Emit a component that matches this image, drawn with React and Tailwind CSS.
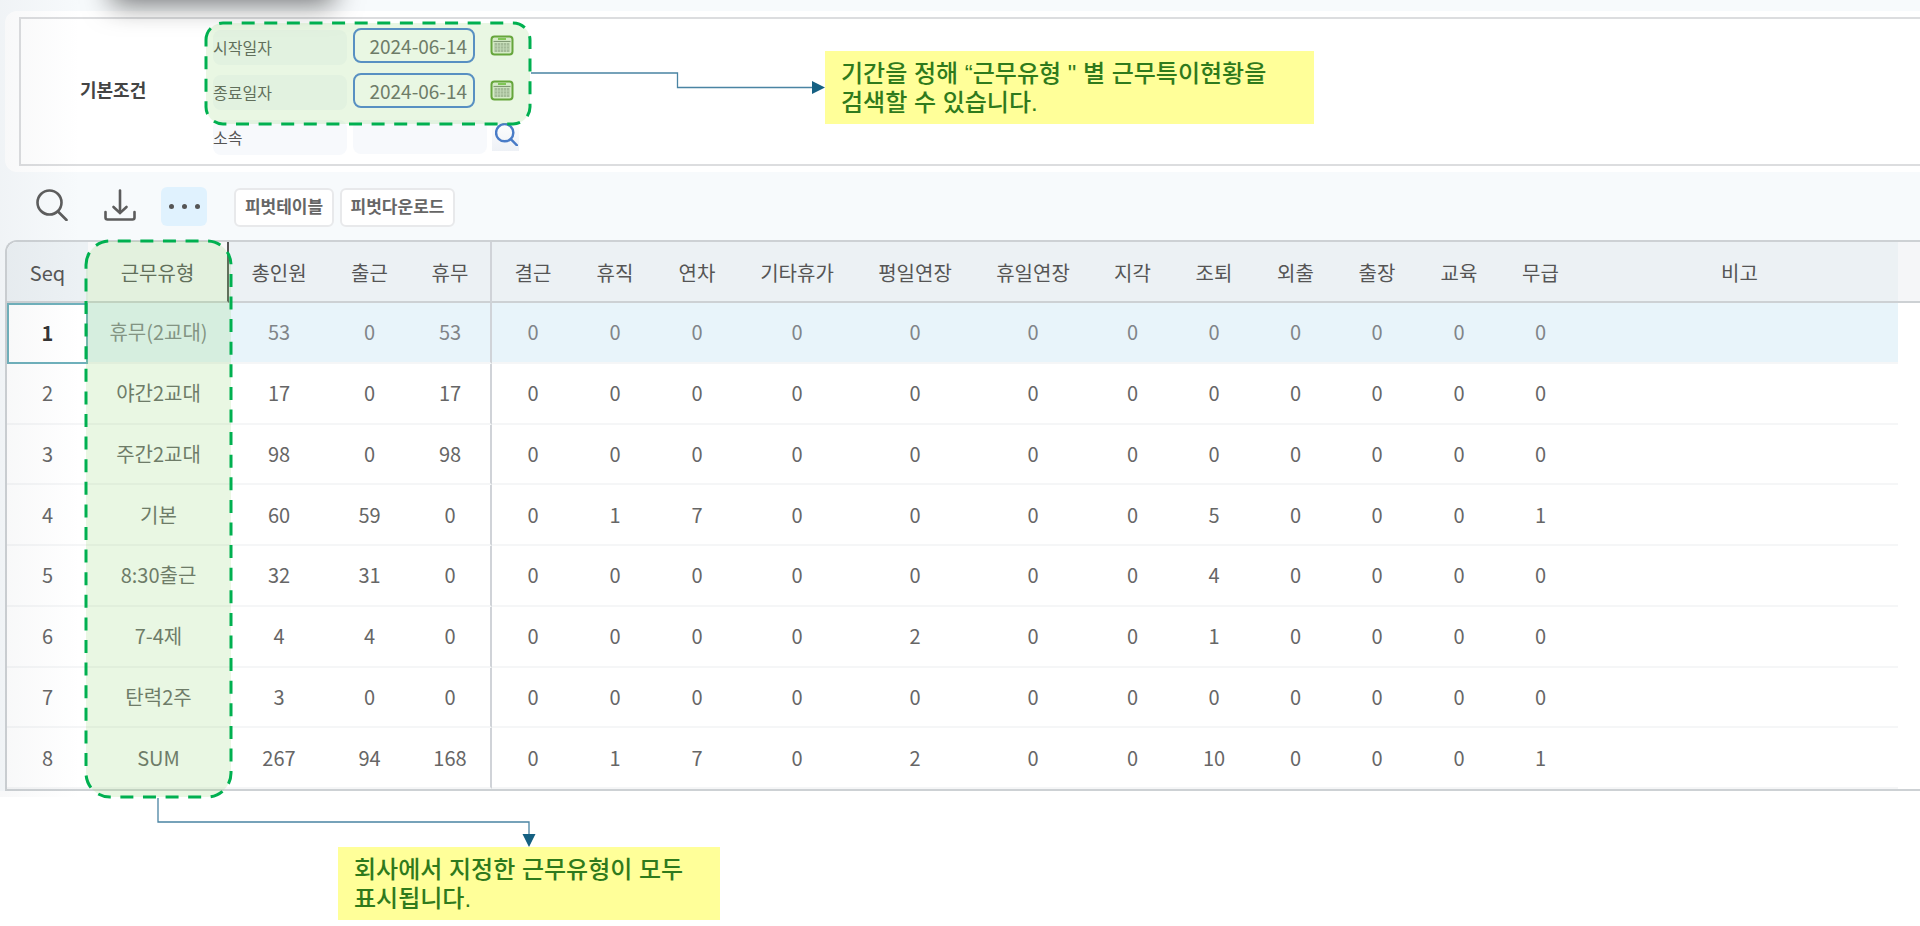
import React, { useState } from 'react';

const COLUMNS = [
  { key: 'seq', label: 'Seq', width: 'w-[81px]' },
  { key: 'type', label: '근무유형', width: 'w-[141px]' },
  { key: 'total', label: '총인원', width: 'w-[100px]' },
  { key: 'work', label: '출근', width: 'w-[81px]' },
  { key: 'off', label: '휴무', width: 'w-[82px]' },
  { key: 'absent', label: '결근', width: 'w-[82px]' },
  { key: 'leave', label: '휴직', width: 'w-[82px]' },
  { key: 'annual', label: '연차', width: 'w-[82px]' },
  { key: 'etc', label: '기타휴가', width: 'w-[118px]' },
  { key: 'weekdayOver', label: '평일연장', width: 'w-[118px]' },
  { key: 'holidayOver', label: '휴일연장', width: 'w-[118px]' },
  { key: 'late', label: '지각', width: 'w-[81px]' },
  { key: 'early', label: '조퇴', width: 'w-[82px]' },
  { key: 'out', label: '외출', width: 'w-[81px]' },
  { key: 'trip', label: '출장', width: 'w-[82px]' },
  { key: 'edu', label: '교육', width: 'w-[82px]' },
  { key: 'unpaid', label: '무급', width: 'w-[81px]' },
  { key: 'note', label: '비고', width: 'w-auto' },
];

const ROWS = [
  ['1', '휴무(2교대)', 53, 0, 53, 0, 0, 0, 0, 0, 0, 0, 0, 0, 0, 0, 0, ''],
  ['2', '야간2교대', 17, 0, 17, 0, 0, 0, 0, 0, 0, 0, 0, 0, 0, 0, 0, ''],
  ['3', '주간2교대', 98, 0, 98, 0, 0, 0, 0, 0, 0, 0, 0, 0, 0, 0, 0, ''],
  ['4', '기본', 60, 59, 0, 0, 1, 7, 0, 0, 0, 0, 5, 0, 0, 0, 1, ''],
  ['5', '8:30출근', 32, 31, 0, 0, 0, 0, 0, 0, 0, 0, 4, 0, 0, 0, 0, ''],
  ['6', '7-4제', 4, 4, 0, 0, 0, 0, 0, 2, 0, 0, 1, 0, 0, 0, 0, ''],
  ['7', '탄력2주', 3, 0, 0, 0, 0, 0, 0, 0, 0, 0, 0, 0, 0, 0, 0, ''],
  ['8', 'SUM', 267, 94, 168, 0, 1, 7, 0, 2, 0, 0, 10, 0, 0, 0, 1, ''],
];

function CalendarIcon() {
  return (
    <svg width="24" height="21" viewBox="0 0 24 21" fill="none">
      <rect x="1.5" y="1.5" width="21" height="18" rx="3" fill="#e6f1dc" stroke="#5c9a2f" strokeWidth="2" />
      <path d="M8 4h8" stroke="#62b82e" strokeWidth="1.6" />
      <path d="M3.5 6.500h17" stroke="#7d8a76" strokeWidth="1.2" />
      <rect x="4.500" y="8" width="15" height="9" fill="#a9b5a2" />
      <path d="M7.500 8v9M10.500 8v9M13.500 8v9M16.500 8v9M4.500 11h15M4.500 14h15" stroke="#cfd9c8" strokeWidth="0.8" />
    </svg>
  );
}

function SearchIcon({ size, color, strokeWidth }) {
  return (
    <svg width={size} height={size} viewBox="0 0 32 32" fill="none" stroke={color} strokeWidth={strokeWidth}>
      <circle cx="13.5" cy="13.5" r="12" />
      <path d="M22 22.5l8.5 8.5" strokeLinecap="round" />
    </svg>
  );
}

function DownloadIcon() {
  return (
    <svg width="32" height="32" viewBox="0 0 32 32" fill="none" stroke="#5c5c5c" strokeWidth="2.6" strokeLinecap="round">
      <path d="M16 1.5v22" />
      <path d="M9.500 18l6.500 6l6.500-6" />
      <path d="M1.500 23v5.500q0 2 2 2h25q2 0 2-2v-5.500" />
    </svg>
  );
}

function DateRow({ id, label, value, onChange }) {
  return (
    <div className="flex items-start h-[45px]">
      <label htmlFor={id} className="w-[134px] h-[35px] mt-0.5 rounded-lg bg-[#f7f9fc] leading-[34px]">{label}</label>
      <input
        id={id}
        type="text"
        value={value}
        onChange={(e) => onChange(e.target.value)}
        className="ml-1.5 w-[122px] h-[35px] pr-1.5 rounded-lg border-2 border-[#4a7fd6] bg-white text-right text-[19px] font-['Noto_Sans_CJK_KR',sans-serif] text-[#666]"
      />
      <button type="button" aria-label={`${label} 달력`} className="ml-[15px] mt-[7px]">
        <CalendarIcon />
      </button>
    </div>
  );
}

function SearchPanel() {
  const [start, setStart] = useState('2024-06-14');
  const [end, setEnd] = useState('2024-06-14');

  return (
    <form className="ml-[5px] rounded-l-xl bg-white pt-1.5 pb-1.5 pl-3.5" onSubmit={(e) => e.preventDefault()}>
      <div className="flex h-[149px] items-start border-2 border-r-0 border-[#dcdddf] pt-[9px] text-[16px] text-[#555]">
        <h2 className="w-[192px] pt-[49px] pl-[59px] leading-6 text-[18px] font-bold text-[#444]">기본조건</h2>
        <div>
          <DateRow id="start" label="시작일자" value={start} onChange={setStart} />
          <DateRow id="end" label="종료일자" value={end} onChange={setEnd} />
          <div className="flex items-start">
            <label htmlFor="dept" className="w-[134px] h-[35px] mt-0.5 rounded-lg bg-[#f7f9fc] leading-[34px]">소속</label>
            <input id="dept" type="text" className="ml-1.5 mt-0.5 w-[134px] h-[34px] rounded-lg bg-[#f7f9fc]" />
            <button type="button" aria-label="소속 검색" className="ml-[5px] mt-0.5 flex h-[31px] w-[27px] items-center justify-end bg-linear-to-b from-white to-[#eef1f6] pr-px pb-0.5">
              <SearchIcon size={23} color="#4a7cc7" strokeWidth="3.4" />
            </button>
          </div>
        </div>
      </div>
    </form>
  );
}

function Toolbar() {
  return (
    <div className="flex h-[68px] items-center pl-9 pb-0.5">
      <button type="button" aria-label="검색"><SearchIcon size={32} color="#5c5c5c" strokeWidth="2.6" /></button>
      <button type="button" aria-label="다운로드" className="ml-9"><DownloadIcon /></button>
      <button type="button" aria-label="더보기" className="ml-[25px] mt-0.5 flex h-[39px] w-[46px] items-center justify-center gap-2 rounded-md bg-[#e0f2fe]">
        <span className="size-[5px] rounded-full bg-[#555]" />
        <span className="size-[5px] rounded-full bg-[#555]" />
        <span className="size-[5px] rounded-full bg-[#555]" />
      </button>
      <button type="button" className="ml-[27px] mt-1 h-[39px] w-[100px] rounded-md border-2 border-[#e8e9eb] bg-white pb-0.5 text-[17px] font-bold text-[#666]">피벗테이블</button>
      <button type="button" className="ml-1.5 mt-1 h-[39px] w-[115px] rounded-md border-2 border-[#e8e9eb] bg-white pb-0.5 text-[17px] font-bold text-[#666]">피벗다운로드</button>
    </div>
  );
}

function WorkTypeTable() {
  // the frozen columns end after 휴무
  const divider = (i) => (i === 4 ? 'border-r-2 border-r-[#d0d3d8]' : '');

  return (
    <div className="ml-[5px] overflow-hidden rounded-tl-xl border-2 border-r-0 border-[#cdd1d4]">
      <table className="h-[547px] w-full table-fixed border-separate border-spacing-0 bg-white text-[20px] leading-7 text-[#666]">
        <thead>
          <tr className="h-[61px] text-[#555]">
            {COLUMNS.map((col, i) => (
              <th
                key={col.key}
                className={`${col.width} border-b-2 border-b-[#cdd1d4] p-0 pt-0.5 font-normal ${divider(i)} ${i === 1 ? 'border-r-2 border-r-[#555] bg-[#f8f8f9]' : 'bg-[#ecf1f4]'}`}
              >
                {col.label}
              </th>
            ))}
            <th className="w-[22px] border-b-2 border-b-[#cdd1d4] bg-[#f5f6f8] p-0" />
          </tr>
        </thead>
        <tbody>
          {ROWS.map((row, r) => (
            <tr key={row[0]} className={`h-[60px] ${r === 0 ? 'text-[#808488]' : ''}`}>
              {row.map((cell, i) => {
                const selected = r === 0 && i === 0;
                return (
                  <td
                    key={COLUMNS[i].key}
                    className={`p-0 text-center ${
                      selected
                        ? 'border-2 border-[#6eb0bb] bg-white font-bold text-[#333]'
                        : `border-b-2 border-b-[#f5f6f7] ${r === 0 ? 'bg-[#e8f4fa]' : ''} ${divider(i)}`
                    }`}
                  >
                    {cell}
                  </td>
                );
              })}
              <td className="p-0" />
            </tr>
          ))}
        </tbody>
      </table>
    </div>
  );
}

// Highlight boxes and connector lines that lie over the screen
function Annotations() {
  return (
    <>
      <svg className="pointer-events-none absolute top-0 left-0" width="840" height="860" fill="none">
        <g fill="rgb(145,215,115)" fillOpacity="0.2" stroke="#00b050" strokeWidth="3" strokeDasharray="13 9.6">
          <path d="M206 40a17 17 0 0 1 17-17h290a17 17 0 0 1 17 17v67a17 17 0 0 1-17 17h-290a17 17 0 0 1-17-17z" />
          <path d="M86 265a24 24 0 0 1 24-24h97a24 24 0 0 1 24 24v508a24 24 0 0 1-24 24h-97a24 24 0 0 1-24-24z" />
        </g>
        <g stroke="#4a84a3" strokeWidth="1.3">
          <path d="M531 73h146.500v14.500h135" />
          <path d="M158 798v24h371v13" />
        </g>
        <path d="M812 81l13 6.500l-13 6.500zM522.500 834h13l-6.500 13z" fill="#156082" />
      </svg>
      <p className="absolute top-[51px] left-[825px] h-[73px] w-[489px] bg-[#ffff99] px-4 pt-2 text-[24px] leading-[29px] font-medium text-[#2f7a1c] font-['Liberation_Sans','Noto_Sans_CJK_KR',sans-serif]">
        기간을 정해 “근무유형 " 별 근무특이현황을<br />검색할 수 있습니다.
      </p>
      <p className="absolute top-[847px] left-[338px] h-[73px] w-[382px] bg-[#ffff99] px-4 pt-2 text-[24px] leading-[29px] font-medium text-[#2f7a1c] font-['Liberation_Sans','Noto_Sans_CJK_KR',sans-serif]">
        회사에서 지정한 근무유형이 모두<br />표시됩니다.
      </p>
    </>
  );
}

export default function App() {
  return (
    <main className="relative min-h-screen overflow-hidden bg-white font-['Noto_Sans_CJK_KR',sans-serif]">
      <div className="bg-[#f7fafc] pt-[11px]">
        <SearchPanel />
        <Toolbar />
        <WorkTypeTable />
      </div>
      <div className="pointer-events-none absolute top-0 left-0 h-[797px] w-20 bg-linear-to-r from-gray-500/5 to-transparent" />
      <div className="pointer-events-none absolute -top-10 left-[115px] h-10 w-[215px] shadow-[0_0_28px_4px_rgba(0,0,0,0.55)]" />
      <Annotations />
    </main>
  );
}
